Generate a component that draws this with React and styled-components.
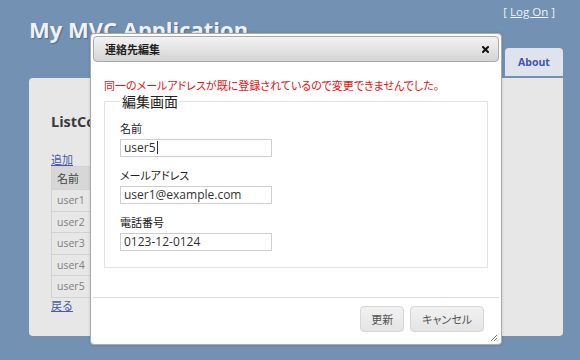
import React from 'react'
import styled, { createGlobalStyle } from 'styled-components'

const GlobalStyle = createGlobalStyle`
  html, body {
    margin: 0;
    padding: 0;
    background: #7291b3;
  }
  body {
    width: 580px;
    height: 360px;
    overflow: hidden;
    font-family: "Open Sans", "Noto Sans CJK JP", sans-serif;
  }
`

const Page = styled.div`
  position: relative;
  width: 580px;
  height: 360px;
  box-sizing: border-box;
  padding: 0 17px 0 29px;
`

const Header = styled.div`
  display: flex;
  justify-content: space-between;
  height: 78px;
`

const Title = styled.h1`
  margin: 0;
  padding-top: 15px;
  font-family: "Open Sans", sans-serif;
  font-size: 22px;
  font-weight: bold;
  line-height: 28px;
  color: #eef2f6;
  text-shadow: 1px 1px 1px rgba(40, 60, 90, 0.45);
`

const HeaderRight = styled.div`
  display: flex;
  flex-direction: column;
  align-items: flex-end;
`

const LoginDisplay = styled.div`
  padding: 4px 8px 0 0;
  font-family: "Open Sans", sans-serif;
  font-size: 11.5px;
  line-height: 16px;
  color: #eef2f6;

  a {
    color: #eef2f6;
    text-decoration: underline;
  }
`

const MenuTab = styled.div`
  margin-top: auto;
  margin-bottom: 2px;
  width: 58px;
  height: 28px;
  display: flex;
  align-items: center;
  justify-content: center;
  background: #dfe4ec;
  border-radius: 4px 4px 0 0;
  font-family: "Open Sans", sans-serif;
  font-size: 10.5px;
  font-weight: bold;
  color: #3f55b0;
`

const MainPanel = styled.div`
  height: 258px;
  box-sizing: border-box;
  padding: 34px 22px 0;
  background: #e7e7e7;
  border-radius: 4px 0 4px 4px;
`

const PanelHeading = styled.h2`
  margin: 0;
  font-family: "Open Sans", sans-serif;
  font-size: 14.5px;
  font-weight: bold;
  line-height: 20px;
  color: #3b3b3b;
`

const PlainLink = styled.a`
  display: block;
  font-family: "Noto Sans CJK JP", sans-serif;
  font-size: 11px;
  line-height: 14px;
  color: #4c5aa6;
  text-decoration: underline;
  margin-top: ${p => p.$top || 0}px;
`

const Table = styled.table`
  border-collapse: collapse;
  margin: 0;
  font-size: 11px;
`

const HeadCell = styled.th`
  height: 22px;
  padding: 0 5px;
  text-align: left;
  font-family: "Noto Sans CJK JP", sans-serif;
  font-weight: normal;
  font-size: 11px;
  color: #444;
  background: #d7d7d7;
  border: 1px solid #d2d2d2;
`

const Cell = styled.td`
  height: 20.5px;
  padding: 0 5px;
  font-family: "Open Sans", sans-serif;
  font-size: 10.5px;
  color: #808080;
  border: 1px solid #d2d2d2;
  white-space: nowrap;

  a {
    color: #4c5aa6;
    font-family: "Noto Sans CJK JP", sans-serif;
  }
`

const Dialog = styled.div`
  position: absolute;
  left: 90px;
  top: 33px;
  width: 412px;
  height: 312px;
  box-sizing: border-box;
  padding: 2px;
  display: flex;
  flex-direction: column;
  background: #fff;
  border: 1px solid #aaa;
  border-radius: 4px;
  box-shadow: 0 0 3px rgba(0, 0, 0, 0.15);
  font-family: "Noto Sans CJK JP", sans-serif;
  font-feature-settings: "palt";
`

const TitleBar = styled.div`
  height: 26px;
  box-sizing: border-box;
  display: flex;
  align-items: center;
  justify-content: space-between;
  padding: 0 9px 0 11px;
  border: 1px solid #aaa;
  border-radius: 4px;
  background: linear-gradient(#f3f3f3, #d4d4d4);
`

const DialogTitle = styled.span`
  font-size: 11px;
  font-weight: bold;
  color: #222;
`

const CloseButton = styled.span`
  display: flex;
  width: 7px;
  height: 7px;
`

const DialogContent = styled.div`
  flex: 1;
  padding: 16px 11px 0;
`

const ErrorText = styled.div`
  font-size: 11px;
  line-height: 14px;
  color: #e31212;
`

const Fieldset = styled.fieldset`
  margin: 1px 0 0;
  padding: 12px 15px 5px;
  border: 1px solid #e2e2e2;
`

const Legend = styled.legend`
  margin-left: 0;
  padding: 0 2px;
  font-size: 14px;
  line-height: 16px;
  color: #222;
`

const FieldLabel = styled.div`
  font-size: 11px;
  line-height: 14px;
  color: #222;
  margin-bottom: 4px;
`

const TextInput = styled.div`
  width: 152px;
  height: 18px;
  box-sizing: border-box;
  margin-bottom: 11px;
  padding: 0 3px;
  border: 1px solid #cfcfcf;
  font-family: "Open Sans", sans-serif;
  font-size: 12px;
  line-height: 16px;
  color: #333;
  white-space: nowrap;
`

const Caret = styled.span`
  display: inline-block;
  width: 1px;
  height: 13px;
  margin-left: 1px;
  vertical-align: -2px;
  background: #333;
`

const ButtonPane = styled.div`
  display: flex;
  justify-content: flex-end;
  gap: 6px;
  padding: 8px 15px 10px;
  border-top: 1px solid #dcdcdc;
  position: relative;
`

const Button = styled.button`
  height: 26px;
  padding: 0 ${p => p.$pad || 14}px;
  box-sizing: border-box;
  border: 1px solid #d6d6d6;
  border-radius: 4px;
  background: linear-gradient(#f2f2f2, #e4e4e4);
  font-family: "Noto Sans CJK JP", sans-serif;
  font-feature-settings: "palt";
  font-size: 11px;
  color: #555;
`

const Grip = styled.span`
  position: absolute;
  right: 1px;
  bottom: 0px;
  width: 8px;
  height: 8px;
  display: flex;
`

const fields = [
  { label: '名前', value: 'user5', caret: true },
  { label: 'メールアドレス', value: 'user1@example.com' },
  { label: '電話番号', value: '0123-12-0124' },
]

const users = ['user1', 'user2', 'user3', 'user4', 'user5']

const App = () => (
  <>
    <GlobalStyle />
    <Page>
      <Header>
        <Title>My MVC Application</Title>
        <HeaderRight>
          <LoginDisplay>[ <a href="#">Log On</a> ]</LoginDisplay>
          <MenuTab>About</MenuTab>
        </HeaderRight>
      </Header>
      <MainPanel>
        <PanelHeading>ListContacts</PanelHeading>
        <PlainLink href="#" $top={20}>追加</PlainLink>
        <Table>
          <thead>
            <tr>
              <HeadCell>名前</HeadCell>
              <HeadCell>操作</HeadCell>
            </tr>
          </thead>
          <tbody>
            {users.map(u => (
              <tr key={u}>
                <Cell>{u}</Cell>
                <Cell><a href="#">編集</a> | <a href="#">削除</a></Cell>
              </tr>
            ))}
          </tbody>
        </Table>
        <PlainLink href="#">戻る</PlainLink>
      </MainPanel>

      <Dialog>
        <TitleBar>
          <DialogTitle>連絡先編集</DialogTitle>
          <CloseButton>
            <svg width="7" height="7" viewBox="0 0 7 7">
              <path d="M1 1 L6 6 M6 1 L1 6" stroke="#111" strokeWidth="2" strokeLinecap="square" />
            </svg>
          </CloseButton>
        </TitleBar>
        <DialogContent>
          <ErrorText>同一のメールアドレスが既に登録されているので変更できませんでした。</ErrorText>
          <Fieldset>
            <Legend>編集画面</Legend>
            {fields.map(f => (
              <div key={f.label}>
                <FieldLabel>{f.label}</FieldLabel>
                <TextInput>
                  {f.value}
                  {f.caret && <Caret />}
                </TextInput>
              </div>
            ))}
          </Fieldset>
        </DialogContent>
        <ButtonPane>
          <Button $pad={10}>更新</Button>
          <Button $pad={11}>キャンセル</Button>
          <Grip>
            <svg width="8" height="8" viewBox="0 0 8 8">
              <path d="M7 1 L1 7 M7 4 L4 7 M7 6.5 L6.5 7" stroke="#777" strokeWidth="1" />
            </svg>
          </Grip>
        </ButtonPane>
      </Dialog>
    </Page>
  </>
)

export default App
